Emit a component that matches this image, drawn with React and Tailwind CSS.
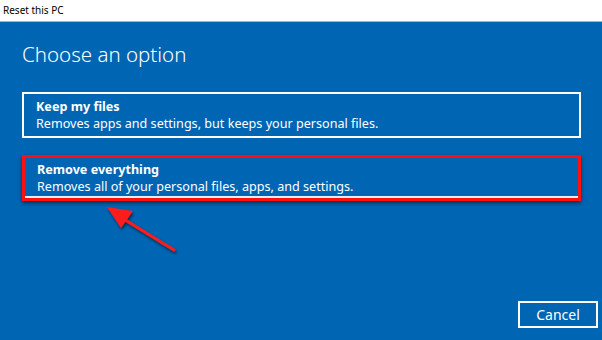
import React from 'react';

const options = [
    { title: 'Keep my files', desc: 'Removes apps and settings, but keeps your personal files.' },
    { title: 'Remove everything', desc: 'Removes all of your personal files, apps, and settings.', marked: true },
];

const App = () => {
    return (
        <div className="relative w-[602px] h-[340px] flex flex-col overflow-hidden font-['Noto_Sans',sans-serif]">
            {/* window title bar */}
            <div className="h-[22px] bg-white border-b border-[#9fb7cf] flex items-center pl-[3px] text-[10px] text-black">
                Reset this PC
            </div>

            <div className="flex-1 bg-[#0065b3] flex flex-col pl-[22px] pr-[21px] text-white">
                <h1 className="mt-[18px] text-[20.5px] font-light leading-[28px]">Choose an option</h1>

                <div className="mt-[24px] flex flex-col gap-[17px]">
                    {options.map((o) => (
                        <div
                            key={o.title}
                            className={`h-[46px] flex flex-col justify-center pl-[12px] ${o.marked
                                ? 'border-[3px] border-[#ff1010] shadow-[0_2px_4px_rgba(0,0,0,0.55),inset_0_-2px_0_#e8eef5]'
                                : 'border-2 border-white'
                                }`}
                        >
                            <div className="text-[12.6px] font-bold leading-[17px]">{o.title}</div>
                            <div className="text-[12.6px] leading-[18px]">{o.desc}</div>
                        </div>
                    ))}
                </div>

                <div className="mt-auto mb-[12px] flex justify-end -mr-[17px]">
                    <button className="w-[80px] h-[27px] border-2 border-white text-[14px] text-white leading-none">
                        Cancel
                    </button>
                </div>
            </div>

            {/* red annotation arrow */}
            <svg className="absolute left-0 top-0 pointer-events-none" width="602" height="340">
                <defs>
                    <filter id="sh" x="-20%" y="-20%" width="140%" height="140%">
                        <feDropShadow dx="1" dy="2" stdDeviation="1.5" floodColor="#000" floodOpacity="0.6" />
                    </filter>
                </defs>
                <g filter="url(#sh)">
                    <line x1="174" y1="250" x2="122" y2="218" stroke="#ff1a1a" strokeWidth="3" strokeLinecap="round" />
                    <polygon points="107,207 133,211 121,228" fill="#ff1a1a" />
                </g>
            </svg>
        </div>
    );
};

export default App;
